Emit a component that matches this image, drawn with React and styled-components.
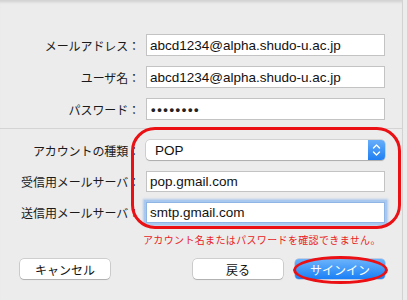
import React from "react";
import styled, { createGlobalStyle } from "styled-components";

const Global = createGlobalStyle`
  html, body { margin: 0; padding: 0; background: #ececec; }
  body { font-family: "Liberation Sans", "Noto Sans CJK JP", sans-serif; }
`;

const Sheet = styled.div`
  position: relative;
  width: 402px;
  height: 300px;
  background: #ececec;
  border-right: 1px solid #d2d2d2;
  box-shadow: inset 0 4px 3px -2px rgba(0, 0, 0, 0.12);
  overflow: hidden;
`;

const Section = styled.div`
  display: grid;
  grid-template-columns: 140px 239px;
  column-gap: 6px;
  row-gap: ${(p) => p.$gap}px;
  grid-auto-rows: ${(p) => p.$row}px;
  padding-top: ${(p) => p.$top}px;
  padding-bottom: ${(p) => p.$bottom}px;
  align-items: center;
`;

const Divider = styled.div`
  height: 1px;
  background: #d4d4d4;
`;

const Label = styled.div`
  font-family: "Noto Sans CJK JP", sans-serif;
  font-size: 12px;
  color: #1a1a1a;
  text-align: right;
  white-space: nowrap;
  letter-spacing: -0.1px;
`;

const Field = styled.div`
  box-sizing: border-box;
  height: 100%;
  background: #fff;
  border: 1px solid ${(p) => (p.$focus ? "#8fb5e4" : "#c3c3c3")};
  box-shadow: ${(p) =>
    p.$focus ? "0 0 0 2px #a9c8ef, 0 0 2px 3px rgba(120,170,235,0.5)" : "none"};
  display: flex;
  align-items: center;
  padding-left: 3px;
  font-family: "Liberation Sans", sans-serif;
  font-size: 13.5px;
  color: #111;
  white-space: nowrap;
`;

const Dots = styled.span`
  font-size: 13px;
  letter-spacing: 1.6px;
  font-weight: bold;
  color: #222;
  padding-left: 1px;
`;

const Popup = styled.div`
  box-sizing: border-box;
  height: 20px;
  align-self: start;
  display: flex;
  align-items: stretch;
  background: #fff;
  border-radius: 4px;
  box-shadow: 0 0 0 0.5px rgba(0, 0, 0, 0.22), 0 1px 1px rgba(0, 0, 0, 0.18);
  overflow: hidden;
`;

const PopupText = styled.div`
  flex: 1;
  display: flex;
  align-items: center;
  padding-left: 9px;
  font-family: "Liberation Sans", sans-serif;
  font-size: 13.5px;
  color: #111;
`;

const Stepper = styled.div`
  width: 17px;
  background: linear-gradient(#67aefa, #1f7ff3);
  display: flex;
  align-items: center;
  justify-content: center;
`;

const ErrorText = styled.div`
  padding-left: 143px;
  margin-top: 8px;
  height: 18px;
  font-family: "Noto Sans CJK JP", sans-serif;
  font-size: 10px;
  letter-spacing: 0.35px;
  line-height: 18px;
  color: #e8231d;
  white-space: nowrap;
`;

const Buttons = styled.div`
  display: flex;
  padding-left: 20px;
  margin-top: 10px;
`;

const Button = styled.div`
  box-sizing: border-box;
  width: 90px;
  height: 20px;
  margin-left: ${(p) => p.$ml || 0}px;
  border-radius: 4px;
  display: flex;
  align-items: center;
  justify-content: center;
  font-family: "Noto Sans CJK JP", sans-serif;
  font-size: 12px;
  color: ${(p) => (p.$primary ? "#fff" : "#111")};
  background: ${(p) =>
    p.$primary ? "linear-gradient(#6cb4fb, #1a80f6)" : "#fff"};
  box-shadow: ${(p) =>
    p.$primary
      ? "0 0 0 0.5px rgba(0,60,160,0.35)"
      : "0 0 0 0.5px rgba(0,0,0,0.25), 0 1px 1px rgba(0,0,0,0.15)"};
`;

const RingBox = styled.div`
  position: absolute;
  left: 131px;
  top: 127px;
  width: 270px;
  height: 102px;
  box-sizing: border-box;
  border: 3px solid #ea1014;
  border-radius: 24px;
  pointer-events: none;
`;

const RingOval = styled.div`
  position: absolute;
  left: 293px;
  top: 256px;
  width: 95px;
  height: 28px;
  box-sizing: border-box;
  border: 3px solid #ea1014;
  border-radius: 50%;
  pointer-events: none;
`;

const Chevrons = () => (
  <svg width="9" height="14" viewBox="0 0 9 14">
    <path d="M1.5 5 L4.5 2 L7.5 5" fill="none" stroke="#fff" strokeWidth="1.4" strokeLinecap="round" strokeLinejoin="round" />
    <path d="M1.5 9 L4.5 12 L7.5 9" fill="none" stroke="#fff" strokeWidth="1.4" strokeLinecap="round" strokeLinejoin="round" />
  </svg>
);

export default function App() {
  return (
    <>
      <Global />
      <Sheet>
        <Section $top={34} $bottom={8} $gap={10} $row={22}>
          <Label>メールアドレス：</Label>
          <Field>abcd1234@alpha.shudo-u.ac.jp</Field>
          <Label>ユーザ名：</Label>
          <Field>abcd1234@alpha.shudo-u.ac.jp</Field>
          <Label>パスワード：</Label>
          <Field>
            <Dots>••••••••</Dots>
          </Field>
        </Section>
        <Divider />
        <Section $top={11} $bottom={0} $gap={10} $row={21}>
          <Label>アカウントの種類：</Label>
          <Popup>
            <PopupText>POP</PopupText>
            <Stepper>
              <Chevrons />
            </Stepper>
          </Popup>
          <Label>受信用メールサーバ：</Label>
          <Field>pop.gmail.com</Field>
          <Label>送信用メールサーバ：</Label>
          <Field $focus>smtp.gmail.com</Field>
        </Section>
        <ErrorText>アカウント名またはパスワードを確認できません。</ErrorText>
        <Buttons>
          <Button>キャンセル</Button>
          <Button $ml={83}>戻る</Button>
          <Button $ml={12} $primary>サインイン</Button>
        </Buttons>
        <RingBox />
        <RingOval />
      </Sheet>
    </>
  );
}
